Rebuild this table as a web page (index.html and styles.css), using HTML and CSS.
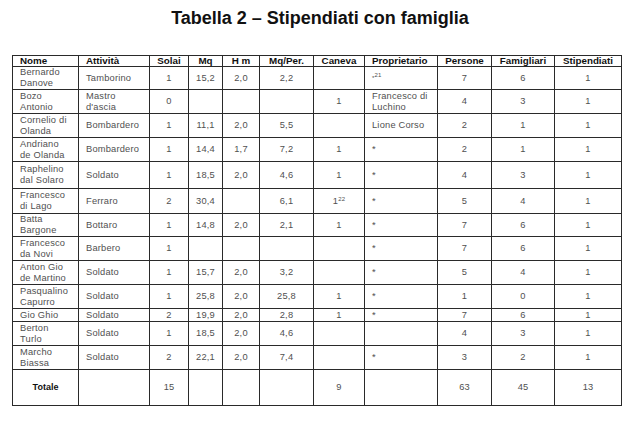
FILE: index.html
```html
<!DOCTYPE html>
<html lang="it">
<head>
<meta charset="utf-8">
<title>Tabella 2 – Stipendiati con famiglia</title>
<link rel="stylesheet" href="styles.css">
</head>
<body>
<div class="page">
  <h1 class="title">Tabella 2 – Stipendiati con famiglia</h1>
  <table class="grid">
    <colgroup>
      <col class="c-nome"><col class="c-att"><col class="c-solai"><col class="c-mq"><col class="c-hm"><col class="c-mqp"><col class="c-can"><col class="c-prop"><col class="c-pers"><col class="c-fam"><col class="c-stip">
    </colgroup>
    <thead>
      <tr class="hd">
        <th class="l">Nome</th><th class="l">Attività</th><th>Solai</th><th>Mq</th><th>H m</th><th>Mq/Per.</th><th>Caneva</th><th class="l">Proprietario</th><th>Persone</th><th>Famigliari</th><th>Stipendiati</th>
      </tr>
    </thead>
    <tbody>
      <tr class="r22"><td class="l">Bernardo<br>Danove</td><td class="l">Tamborino</td><td>1</td><td>15,2</td><td>2,0</td><td>2,2</td><td></td><td class="l"><span class="tiny">*<sup>21</sup></span></td><td>7</td><td>6</td><td>1</td></tr>
      <tr class="r24"><td class="l">Bozo<br>Antonio</td><td class="l">Mastro<br>d'ascia</td><td>0</td><td></td><td></td><td></td><td>1</td><td class="l">Francesco di<br>Luchino</td><td>4</td><td>3</td><td>1</td></tr>
      <tr class="r24"><td class="l">Cornelio di<br>Olanda</td><td class="l">Bombardero</td><td>1</td><td>11,1</td><td>2,0</td><td>5,5</td><td></td><td class="l">Lione Corso</td><td>2</td><td>1</td><td>1</td></tr>
      <tr class="r24"><td class="l">Andriano<br>de Olanda</td><td class="l">Bombardero</td><td>1</td><td>14,4</td><td>1,7</td><td>7,2</td><td>1</td><td class="l">*</td><td>2</td><td>1</td><td>1</td></tr>
      <tr class="r27"><td class="l">Raphelino<br>dal Solaro</td><td class="l">Soldato</td><td>1</td><td>18,5</td><td>2,0</td><td>4,6</td><td>1</td><td class="l">*</td><td>4</td><td>3</td><td>1</td></tr>
      <tr class="r25"><td class="l">Francesco<br>di Lago</td><td class="l">Ferraro</td><td>2</td><td>30,4</td><td></td><td>6,1</td><td>1<sup class="sup">22</sup></td><td class="l">*</td><td>5</td><td>4</td><td>1</td></tr>
      <tr class="r23"><td class="l">Batta<br>Bargone</td><td class="l">Bottaro</td><td>1</td><td>14,8</td><td>2,0</td><td>2,1</td><td>1</td><td class="l">*</td><td>7</td><td>6</td><td>1</td></tr>
      <tr class="r24"><td class="l">Francesco<br>da Novi</td><td class="l">Barbero</td><td>1</td><td></td><td></td><td></td><td></td><td class="l">*</td><td>7</td><td>6</td><td>1</td></tr>
      <tr class="r24"><td class="l">Anton Gio<br>de Martino</td><td class="l">Soldato</td><td>1</td><td>15,7</td><td>2,0</td><td>3,2</td><td></td><td class="l">*</td><td>5</td><td>4</td><td>1</td></tr>
      <tr class="r24"><td class="l">Pasqualino<br>Capurro</td><td class="l">Soldato</td><td>1</td><td>25,8</td><td>2,0</td><td>25,8</td><td>1</td><td class="l">*</td><td>1</td><td>0</td><td>1</td></tr>
      <tr class="r13"><td class="l">Gio Ghio</td><td class="l">Soldato</td><td>2</td><td>19,9</td><td>2,0</td><td>2,8</td><td>1</td><td class="l">*</td><td>7</td><td>6</td><td>1</td></tr>
      <tr class="r24"><td class="l">Berton<br>Turlo</td><td class="l">Soldato</td><td>1</td><td>18,5</td><td>2,0</td><td>4,6</td><td></td><td class="l"></td><td>4</td><td>3</td><td>1</td></tr>
      <tr class="r24"><td class="l">Marcho<br>Biassa</td><td class="l">Soldato</td><td>2</td><td>22,1</td><td>2,0</td><td>7,4</td><td></td><td class="l">*</td><td>3</td><td>2</td><td>1</td></tr>
      <tr class="r36"><td class="tot">Totale</td><td></td><td>15</td><td></td><td></td><td></td><td>9</td><td></td><td>63</td><td>45</td><td>13</td></tr>
    </tbody>
  </table>
</div>
</body>
</html>
```

FILE: styles.css
```css
html, body {
  margin: 0;
  padding: 0;
  background: #ffffff;
}

.page {
  width: 640px;
  padding-top: 7px;
  font-family: "Liberation Sans", Arial, sans-serif;
}

.title {
  margin: 0;
  font-size: 18px;
  line-height: 22px;
  font-weight: bold;
  text-align: center;
  color: #111111;
}

.grid {
  margin: 26px 0 0 12px;
  border-collapse: collapse;
  table-layout: fixed;
  width: 610px;
  border: 1px solid #2a2a2a;
}

.c-nome { width: 66px; }
.c-att { width: 71px; }
.c-solai { width: 39px; }
.c-mq { width: 34px; }
.c-hm { width: 37px; }
.c-mqp { width: 54px; }
.c-can { width: 51px; }
.c-prop { width: 73px; }
.c-pers { width: 54px; }
.c-fam { width: 63px; }
.c-stip { width: 67px; }

.grid th,
.grid td {
  border: 1px solid #2a2a2a;
  padding: 0 2px;
  text-align: center;
  vertical-align: middle;
  overflow: hidden;
  white-space: nowrap;
}

.grid th {
  font-size: 9.8px;
  line-height: 10px;
  font-weight: bold;
  color: #111111;
}

.grid td {
  font-size: 9.3px;
  line-height: 11px;
  letter-spacing: 0.2px;
  color: #505050;
}

.grid .l {
  text-align: left;
  padding-left: 7px;
}

.grid td.tot {
  font-weight: bold;
  color: #111111;
  font-size: 9px;
  letter-spacing: 0;
}

.hd { height: 11px; }
.r13 { height: 13px; }
.r22 { height: 22px; }
.r23 { height: 23px; }
.r24 { height: 24px; }
.r25 { height: 25px; }
.r27 { height: 27px; }
.r36 { height: 36px; }

.tiny {
  font-size: 6px;
}

.tiny sup,
.sup {
  font-size: 6px;
  line-height: 0;
  vertical-align: 3px;
}
```
